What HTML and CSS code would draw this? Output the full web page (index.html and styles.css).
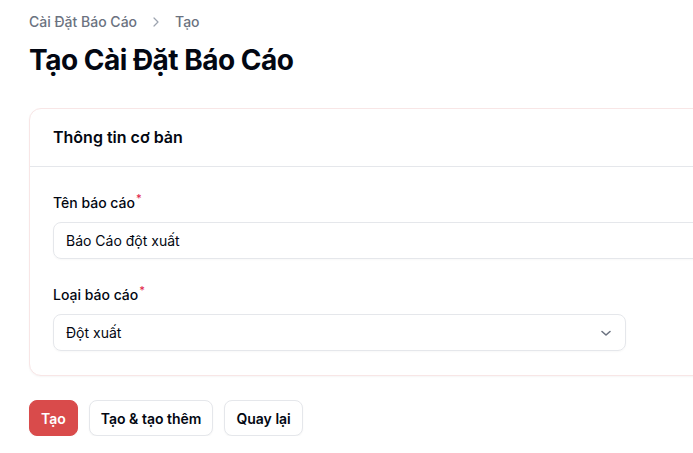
FILE: index.html
```html
<!DOCTYPE html>
<html lang="vi">
<head>
<meta charset="UTF-8">
<title>Tạo Cài Đặt Báo Cáo</title>
<link rel="stylesheet" href="styles.css">
</head>
<body>

<div class="page">
  <nav class="breadcrumbs">
    <span>Cài Đặt Báo Cáo</span>
    <svg class="crumb-sep" width="16" height="16" viewBox="0 0 20 20" fill="none" stroke="currentColor" stroke-width="1.5" stroke-linecap="round" stroke-linejoin="round"><path d="M7.5 5l5 5-5 5"/></svg>
    <span>Tạo</span>
  </nav>

  <h1 class="heading">Tạo Cài Đặt Báo Cáo</h1>

  <section class="card">
    <div class="card-header">Thông tin cơ bản</div>
    <div class="card-body">
      <div class="field">
        <label class="label">Tên báo cáo<sup class="req">*</sup></label>
        <div class="input">Báo Cáo đột xuất</div>
      </div>
      <div class="field">
        <label class="label">Loại báo cáo<sup class="req">*</sup></label>
        <div class="input select">
          <span>Đột xuất</span>
          <svg width="20" height="20" viewBox="0 0 20 20" fill="none" stroke="#6b7280" stroke-width="1.6" stroke-linecap="round" stroke-linejoin="round"><path d="M6 8.5l4 3.5 4-3.5"/></svg>
        </div>
      </div>
    </div>
  </section>

  <div class="actions">
    <button class="btn btn-primary">Tạo</button>
    <button class="btn">Tạo &amp; tạo thêm</button>
    <button class="btn">Quay lại</button>
  </div>
</div>

</body>
</html>
```

FILE: styles.css
```css
body {
  margin: 0;
  font-family: Inter, "Noto Sans", sans-serif;
  background: #fff;
  color: #030712;
  overflow: hidden;
}
.page {
  padding: 12px 0 0 29px;
  width: 920px;
}
.breadcrumbs {
  display: flex;
  align-items: center;
  gap: 9px;
  font-size: 14px;
  line-height: 20px;
  font-weight: 500;
  color: #6b7280;
}
.crumb-sep {
  color: #9ca3af;
  margin: 0 2px;
}
.heading {
  margin: 10px 0 0;
  font-size: 28px;
  line-height: 36px;
  font-weight: 700;
  letter-spacing: -0.5px;
}
.card {
  margin-top: 30px;
  border: 1px solid #f8e6e6;
  border-radius: 12px;
  background: #fff;
  box-shadow: 0 1px 2px rgba(0,0,0,0.04);
}
.card-header {
  padding: 16px 23px;
  font-size: 16px;
  line-height: 25px;
  font-weight: 600;
  border-bottom: 1px solid #e5e7eb;
}
.card-body {
  padding: 24px 23px;
  display: flex;
  flex-direction: column;
  gap: 24px;
}
.field {
  display: flex;
  flex-direction: column;
  gap: 8px;
}
.label {
  font-size: 14px;
  line-height: 23px;
  font-weight: 500;
}
.req {
  color: #e11d48;
  font-size: 11px;
  margin-left: 1px;
  vertical-align: 6px;
  line-height: 0;
}
.input {
  box-sizing: border-box;
  height: 37px;
  border: 1px solid #e5e7eb;
  border-radius: 8px;
  padding: 0 12px;
  font-size: 14px;
  display: flex;
  align-items: center;
  box-shadow: 0 1px 2px rgba(0,0,0,0.03);
}
.select {
  width: 573px;
  justify-content: space-between;
  padding-right: 9px;
}
.actions {
  display: flex;
  gap: 11px;
  margin-top: 24px;
}
.btn {
  font-family: inherit;
  font-size: 14px;
  font-weight: 600;
  height: 36px;
  padding: 0 11px;
  border: 1px solid #e5e7eb;
  border-radius: 8px;
  background: #fff;
  color: #030712;
  box-shadow: 0 1px 2px rgba(0,0,0,0.04);
}
.btn-primary {
  background: #d94b4b;
  border-color: #d94b4b;
  color: #fff;
}
```
